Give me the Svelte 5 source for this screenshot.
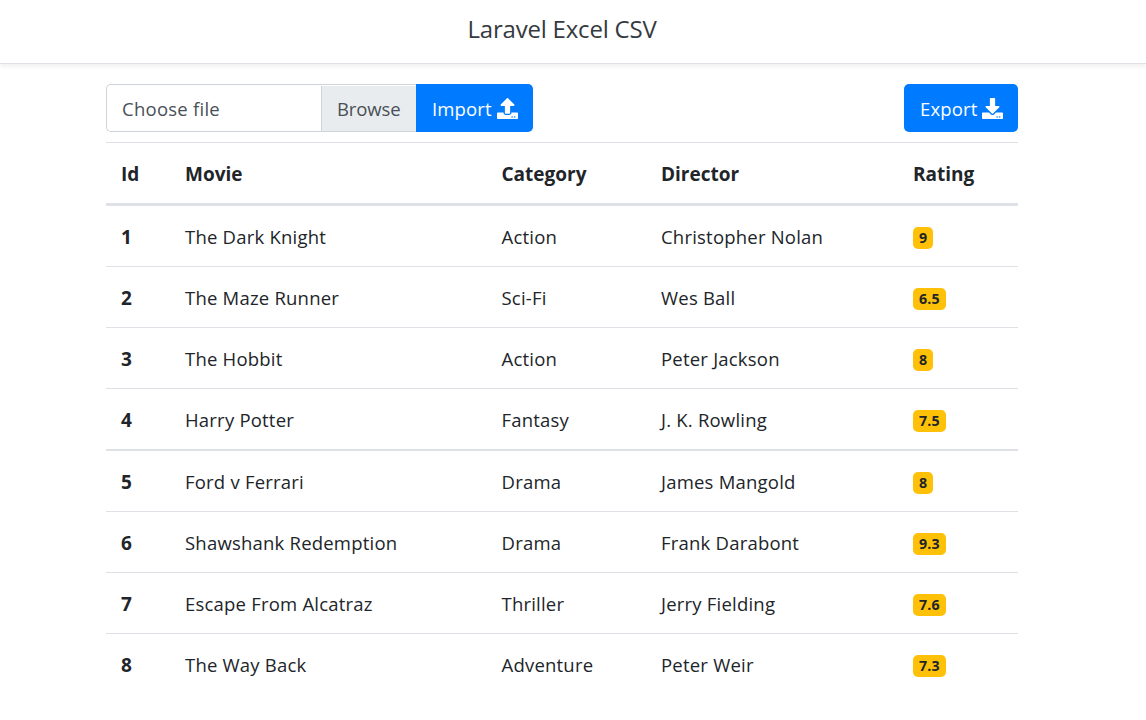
<script>
  const headings = ['Id', 'Movie', 'Category', 'Director', 'Rating'];
  const movies = [
    [1, 'The Dark Knight', 'Action', 'Christopher Nolan', '9'],
    [2, 'The Maze Runner', 'Sci-Fi', 'Wes Ball', '6.5'],
    [3, 'The Hobbit', 'Action', 'Peter Jackson', '8'],
    [4, 'Harry Potter', 'Fantasy', 'J. K. Rowling', '7.5'],
    [5, 'Ford v Ferrari', 'Drama', 'James Mangold', '8'],
    [6, 'Shawshank Redemption', 'Drama', 'Frank Darabont', '9.3'],
    [7, 'Escape From Alcatraz', 'Thriller', 'Jerry Fielding', '7.6'],
    [8, 'The Way Back', 'Adventure', 'Peter Weir', '7.3']
  ];
  const tray = 'm216-8v112c0 13.3-10.7 24-24 24H24c-13.3 0-24-10.7-24-24V376c0-13.3 10.7-24 24-24h136v8c0 30.9 25.1 56 56 56h80c30.9 0 56-25.1 56-56v-8h136c13.3 0 24 10.7 24 24zm-124 88c0-11-9-20-20-20s-20 9-20 20 9 20 20 20 20-9 20-20zm64 0c0-11-9-20-20-20s-20 9-20 20 9 20 20 20 20-9 20-20z';
  const upload = 'M296 384h-80c-13.3 0-24-10.7-24-24V192h-87.7c-17.8 0-26.7-21.5-14.1-34.1L242.3 5.7c7.5-7.5 19.8-7.5 27.3 0l152.2 152.2c12.6 12.6 3.7 34.1-14.1 34.1H320v168c0 13.3-10.7 24-24 24z' + tray;
  const download = 'M216 0h80c13.3 0 24 10.7 24 24v168h87.7c17.8 0 26.7 21.5 14.1 34.1L269.7 378.3c-7.5 7.5-19.8 7.5-27.3 0L90.1 226.1c-12.6-12.6-3.7-34.1 14.1-34.1H192V24c0-13.3 10.7-24 24-24zm296 376v112c0 13.3-10.7 24-24 24H24c-13.3 0-24-10.7-24-24V376c0-13.3 10.7-24 24-24h146.7l49 49c20.1 20.1 52.5 20.1 72.6 0l49-49H488c13.3 0 24 10.7 24 24zm-124 88c0-11-9-20-20-20s-20 9-20 20 9 20 20 20 20-9 20-20zm64 0c0-11-9-20-20-20s-20 9-20 20 9 20 20 20 20-9 20-20z';
</script>

<nav><h1>Laravel Excel CSV</h1></nav>
<main>
  <div class="toolbar">
    <div class="group">
      <label class="file"><span class="name">Choose file</span><span class="browse">Browse</span></label>
      <button class="import"><span>Import</span><svg viewBox="0 0 512 512"><path d={upload} /></svg></button>
    </div>
    <button class="export"><span>Export</span><svg viewBox="0 0 512 512"><path d={download} /></svg></button>
  </div>
  <div class="table" role="table">
    <div class="row head" role="row">
      {#each headings as h}<span role="columnheader">{h}</span>{/each}
    </div>
    {#each movies as [id, title, category, director, rating]}
      <div class="row" class:thick={id === 5} role="row">
        <b>{id}</b><span>{title}</span><span>{category}</span><span>{director}</span>
        <span class="cell"><span class="badge">{rating}</span></span>
      </div>
    {/each}
  </div>
</main>

<style>
  :global(body) { background: #fff; overflow: hidden; }
  :global(#app) { font-family: "Segoe UI", "Open Sans", "Noto Sans", sans-serif; font-size: 18.5px; color: #212529; }
  nav {
    box-sizing: border-box; height: 64px; padding-right: 22px; display: flex; justify-content: center;
    border-bottom: 1px solid #dee2e6; box-shadow: 0 2px 5px rgba(0, 0, 0, 0.075);
  }
  h1 { margin: 0; font-size: 24px; font-weight: 400; letter-spacing: -0.2px; line-height: 58px; color: #343a40; white-space: nowrap; }
  main { width: 912px; margin: 20px 0 0 106px; }
  .toolbar { display: flex; justify-content: space-between; height: 48px; }
  .group { display: flex; }
  .file {
    box-sizing: border-box; width: 310px; display: flex; line-height: 48px; color: #495057;
    border: 1px solid #ced4da; border-right: 0; border-radius: 5px 0 0 5px;
  }
  .name { flex: 1; padding-left: 15px; letter-spacing: 0.25px; }
  .browse {
    box-sizing: border-box; width: 95px; margin-top: 1px; padding-left: 15px; line-height: 46px;
    background: #e9ecef; border-left: 1px solid #ced4da; letter-spacing: -0.1px;
  }
  button {
    box-sizing: border-box; display: flex; align-items: center; justify-content: space-between; height: 48px;
    padding: 0 15px 0 16px; border: 0; border-radius: 5px; background: #007bff; color: #fff; font: inherit;
  }
  button span { line-height: 48px; padding-top: 2px; letter-spacing: 0.15px; }
  .import { width: 117px; border-radius: 0 5px 5px 0; }
  .export { width: 114px; }
  svg { width: 21px; height: 21px; fill: currentColor; }
  .table { margin-top: 10px; }
  .row {
    box-sizing: border-box; height: 61px; padding-left: 15px; display: grid;
    grid-template-columns: 64px 316.5px 159.5px 252px 1fr; align-items: center;
    border-top: 1px solid #dee2e6; white-space: nowrap; line-height: 58px; letter-spacing: 0.21px;
  }
  .row > * { padding-top: 2px; }
  .row > b { font-size: 19px; font-weight: 700; }
  .head { height: 64px; border-bottom: 3px solid #dee2e6; font-size: 19px; font-weight: 700; letter-spacing: 0; }
  .head + .row { height: 60px; border-top: 0; }
  .thick { height: 62px; border-top-width: 2px; }
  .cell { display: flex; align-items: center; }
  .badge {
    height: 22px; padding: 0 6px; margin-top: 2px; border-radius: 5px; background: #ffc107;
    font-size: 14.2px; font-weight: 700; line-height: 22px;
  }
</style>
